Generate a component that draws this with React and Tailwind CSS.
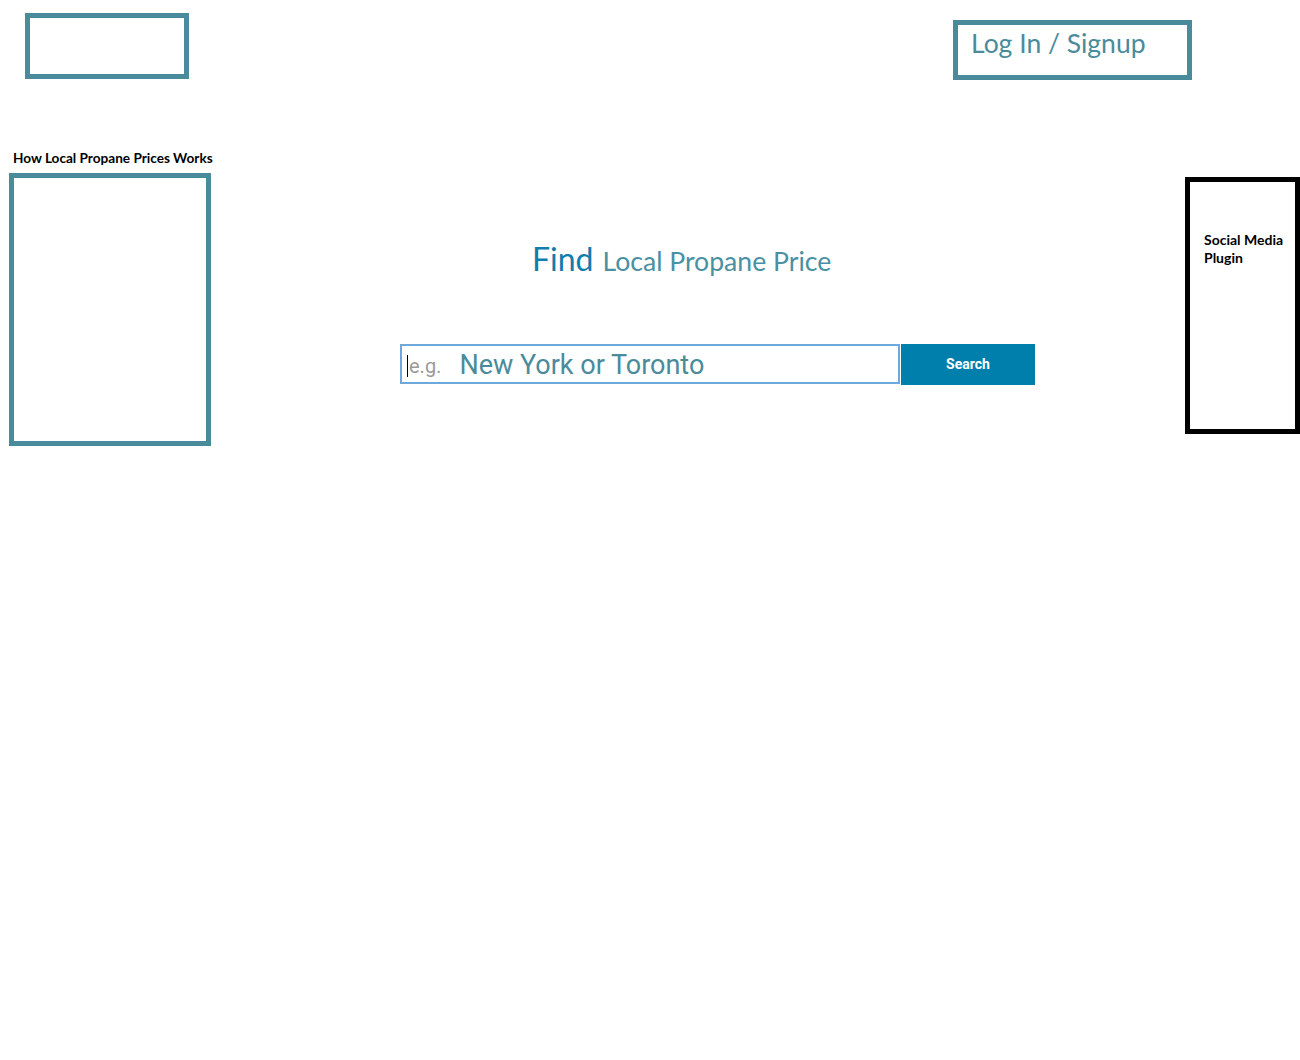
import React from "react";

const App = () => {
  return (
    <div className="min-h-[1060px] w-[1300px] bg-white font-['Lato',sans-serif]">
      <div className="flex items-start justify-between pt-[13px]">
        <div className="ml-[25px] h-[66px] w-[164px] border-[5px] border-[#4a8b9b]" />
        <div className="mr-[108px] mt-[7px] h-[60px] w-[239px] border-[5px] border-[#4a8b9b] pl-[13px] pt-[2px]">
          <span className="text-[26.5px] leading-[32px] text-[#4a8b9b]">Log In / Signup</span>
        </div>
      </div>

      <div className="mt-[70px] flex items-start">
        <div className="ml-[9px] flex w-[202px] flex-col">
          <h3 className="whitespace-nowrap pl-[4px] text-[13.6px] font-bold leading-[16px] text-black">
            How Local Propane Prices Works
          </h3>
          <div className="mt-[7px] h-[273px] border-[5px] border-[#4a8b9b]" />
        </div>

        <div className="flex-1">
          <h1 className="mt-[89px] h-[40px] whitespace-nowrap pl-[321px] leading-[40px]">
            <span className="text-[32px] text-[#0f7dad]">Find</span>
            <span className="ml-[9px] text-[26.6px] text-[#4a90a4]">Local Propane Price</span>
          </h1>
          <div className="ml-[189px] mt-[65px] flex items-start">
            <div className="flex h-[40px] w-[500px] items-center border-2 border-[#6fa8dc] pl-[5px] pt-[3px] font-['Roboto',sans-serif]">
              <span className="mr-[1px] h-[22px] w-px bg-black" />
              <span className="text-[20px] text-[#9a9a9a]">e.g.</span>
              <span className="ml-[18px] text-[27px] text-[#4a8b9b]">New York or Toronto</span>
            </div>
            <button className="ml-px h-[41px] w-[134px] bg-[#017fac] font-['Roboto',sans-serif] text-[14px] font-bold text-white">
              Search
            </button>
          </div>
        </div>

        <div className="mt-[27px] h-[257px] w-[115px] border-[5px] border-black pl-[14px] pt-[49px]">
          <p className="whitespace-nowrap text-[14px] font-bold leading-[18px] text-black">
            Social Media
            <br />
            Plugin
          </p>
        </div>
      </div>
    </div>
  );
};

export default App;
